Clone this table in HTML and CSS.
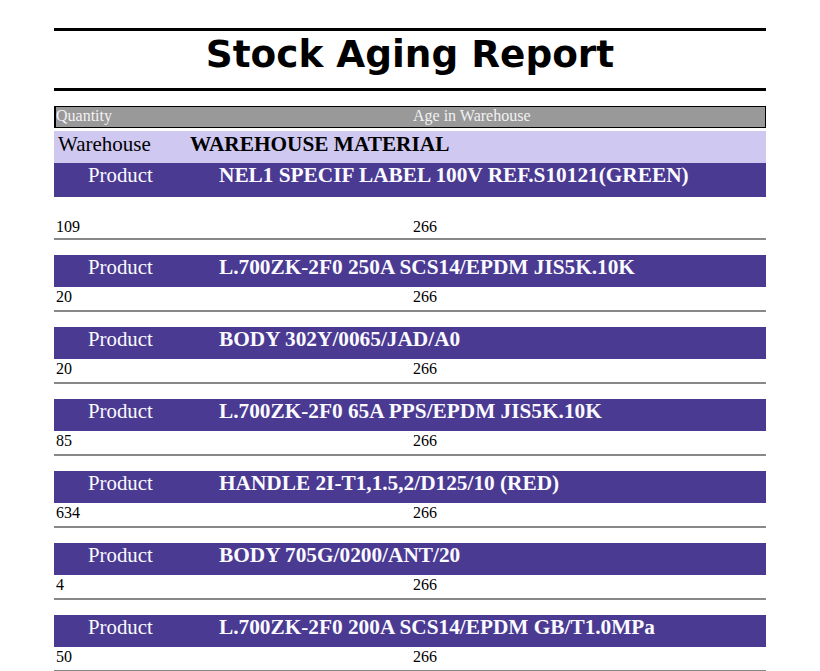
FILE: index.html
```html
<!DOCTYPE html>
<html>
<head>
<meta charset="utf-8">
<title>Stock Aging Report</title>
<link rel="stylesheet" href="styles.css">
</head>
<body>
<div class="page">
  <div class="rule"></div>
  <h1 class="title">Stock Aging Report</h1>
  <div class="rule"></div>

  <div class="colhead">
    <div class="cell">Quantity</div>
    <div class="cell">Age in Warehouse</div>
  </div>

  <div class="warehouse">
    <div class="wlabel">Warehouse</div>
    <div class="wvalue">WAREHOUSE MATERIAL</div>
  </div>

  <div class="group first">
    <div class="product"><div class="plabel">Product</div><div class="pvalue">NEL1 SPECIF LABEL 100V REF.S10121(GREEN)</div></div>
    <div class="data"><div class="cell">109</div><div class="cell">266</div></div>
  </div>

  <div class="group">
    <div class="product"><div class="plabel">Product</div><div class="pvalue">L.700ZK-2F0 250A SCS14/EPDM JIS5K.10K</div></div>
    <div class="data"><div class="cell">20</div><div class="cell">266</div></div>
  </div>

  <div class="group">
    <div class="product"><div class="plabel">Product</div><div class="pvalue">BODY 302Y/0065/JAD/A0</div></div>
    <div class="data"><div class="cell">20</div><div class="cell">266</div></div>
  </div>

  <div class="group">
    <div class="product"><div class="plabel">Product</div><div class="pvalue">L.700ZK-2F0 65A PPS/EPDM JIS5K.10K</div></div>
    <div class="data"><div class="cell">85</div><div class="cell">266</div></div>
  </div>

  <div class="group">
    <div class="product"><div class="plabel">Product</div><div class="pvalue">HANDLE 2I-T1,1.5,2/D125/10 (RED)</div></div>
    <div class="data"><div class="cell">634</div><div class="cell">266</div></div>
  </div>

  <div class="group">
    <div class="product"><div class="plabel">Product</div><div class="pvalue">BODY 705G/0200/ANT/20</div></div>
    <div class="data"><div class="cell">4</div><div class="cell">266</div></div>
  </div>

  <div class="group">
    <div class="product"><div class="plabel">Product</div><div class="pvalue">L.700ZK-2F0 200A SCS14/EPDM GB/T1.0MPa</div></div>
    <div class="data"><div class="cell">50</div><div class="cell">266</div></div>
  </div>
</div>
</body>
</html>
```

FILE: styles.css
```css
html, body {
  margin: 0;
  padding: 0;
  background: #ffffff;
}

body {
  font-family: "Liberation Serif", "Times New Roman", serif;
  font-size: 16px;
  color: #000;
}

.page {
  width: 712px;
  margin: 28px auto 0;
}

.rule {
  height: 3px;
  background: #000;
}

.title {
  margin: 0;
  font-family: "DejaVu Sans", sans-serif;
  font-weight: bold;
  font-size: 37.4px;
  line-height: 46px;
  padding-bottom: 11px;
  text-align: center;
  color: #000;
}

.colhead {
  margin-top: 15px;
  margin-bottom: 3px;
  display: grid;
  grid-template-columns: 355px 1fr;
  background: #999999;
  border: 1px solid #000;
  border-left-width: 2px;
  color: #f2f2f2;
  line-height: 17px;
  padding-bottom: 3px;
}

.colhead .cell + .cell {
  padding-left: 2px;
}

.warehouse {
  display: grid;
  grid-template-columns: 136px 1fr;
  background: #cfc8f0;
  font-size: 21px;
  line-height: 26px;
  padding-bottom: 6px;
}

.wlabel {
  padding-left: 4px;
}

.wvalue {
  font-weight: bold;
  font-size: 21.3px;
}

.product {
  display: grid;
  grid-template-columns: 165px 1fr;
  background: #4a3a92;
  color: #fbfbff;
  font-size: 20.8px;
  line-height: 24px;
  padding-bottom: 8px;
}

.plabel {
  padding-left: 34px;
}

.pvalue {
  font-weight: bold;
  font-size: 21.3px;
  white-space: nowrap;
}

.data {
  display: grid;
  grid-template-columns: 357px 1fr;
  line-height: 18px;
  padding-top: 1px;
  padding-bottom: 4px;
  border-bottom: 2px solid #888888;
}

.data .cell {
  padding-left: 2px;
}

.group {
  margin-bottom: 15px;
}

.group.first .product {
  padding-bottom: 10px;
}

.group.first .data {
  padding-top: 21px;
  padding-bottom: 2px;
}
```
